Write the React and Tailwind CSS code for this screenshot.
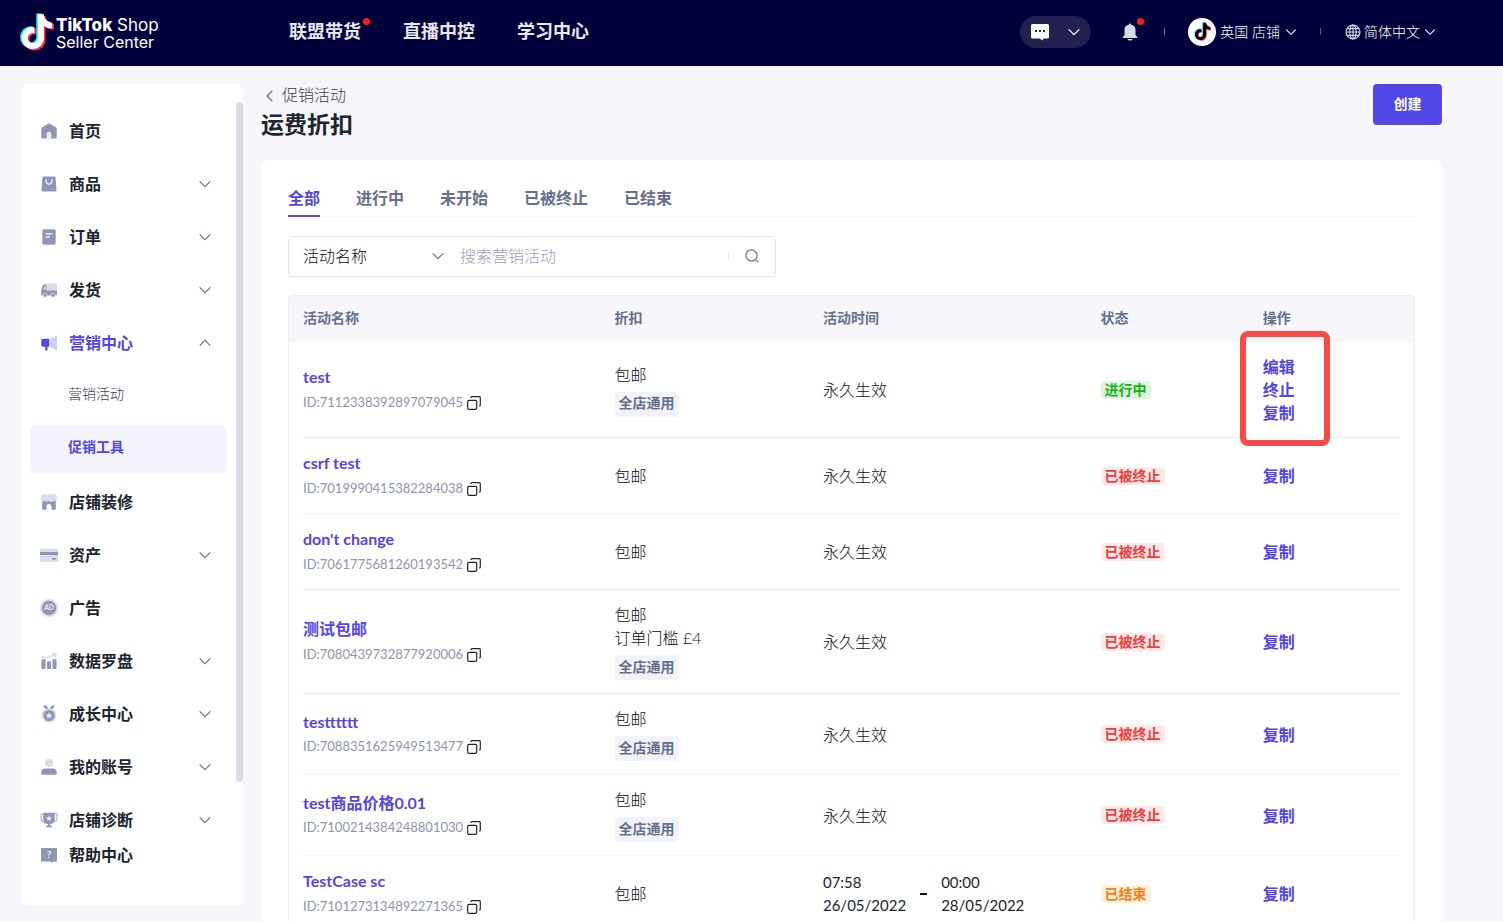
import React from "react";

const NOTE =
  "M448,209.91a210.06,210.06,0,0,1-122.77-39.25V349.38A162.55,162.55,0,1,1,185,188.31V278.2a74.62,74.62,0,1,0,52.23,71.18V0l88,0a121.18,121.18,0,0,0,1.86,22.17h0A122.18,122.18,0,0,0,381,102.39a121.43,121.43,0,0,0,67,20.14Z";

function TikTokNote({ className, main }) {
  return (
    <svg viewBox="-26 -14 500 548" className={className} aria-hidden="true">
      <path d={NOTE} fill="#25f4ee" transform="translate(-24 -12)" />
      <path d={NOTE} fill="#fe2c55" transform="translate(24 20)" />
      <path d={NOTE} fill={main} />
    </svg>
  );
}

function Chevron({ className = "", up = false }) {
  return (
    <svg viewBox="0 0 12 12" className={"h-3 w-3 shrink-0 " + className} fill="none" stroke="currentColor" strokeWidth="1.2" aria-hidden="true">
      <path d={up ? "M.7 8.7 6 3.4l5.3 5.3" : "M.7 3.3 6 8.6l5.3-5.3"} />
    </svg>
  );
}

const D = "#9195b6";
const L = "#d8dbe8";

const icons = {
  home: (
    <>
      <path d="M9 1.2 16.2 5.6a1 1 0 0 1 .5.9v9.3a.8.8 0 0 1-.8.8H2.1a.8.8 0 0 1-.8-.8V6.500a1 1 0 0 1 .5-.9Z" fill={D} />
      <path d="M6.700 16.600V12a2.300 2.300 0 0 1 4.600 0v4.600Z" fill="#eceef9" />
    </>
  ),
  bag: (
    <>
      <path d="M3.400 1.500h11.200a1 1 0 0 1 1 .9l.9 13.100a1 1 0 0 1-1 1.100h-13a1 1 0 0 1-1-1.100l.9-13.100a1 1 0 0 1 1-.9Z" fill={D} />
      <path d="M6.200 4.300v2a2.800 2.800 0 0 0 5.600 0v-2" stroke="#e6e8f4" strokeWidth="1.400" fill="none" />
    </>
  ),
  order: (
    <>
      <rect x="2.300" y="1.300" width="13.400" height="15.400" rx="1.800" fill={D} />
      <path d="M5.500 5.700h6.700M5.500 9h4.500" stroke="#e6e8f4" strokeWidth="1.400" />
    </>
  ),
  truck: (
    <>
      <rect x="6.700" y="2.500" width="10.300" height="7.500" rx="1" fill={L} />
      <path d="M6.500 3.500H4.500a2 2 0 0 0-1.800 1.200L1.300 8.500v5.200a.8.8 0 0 0 .8.800h14.100a.8.800 0 0 0 .8-.8V9.500H6.500Z" fill={D} />
      <path d="M5.300 5.200H4.600L3.400 8.500h1.900Z" fill="#eceef9" />
      <circle cx="5.200" cy="14.200" r="2" fill={D} stroke="#fff" strokeWidth=".5" />
      <circle cx="13" cy="14.200" r="2" fill={D} stroke="#fff" strokeWidth=".5" />
    </>
  ),
  horn: (
    <>
      <path d="M9 5.200 17 1.500v15L9 12.300Z" fill="#cdcffb" />
      <path d="M2.800 4.800H9v8H7.500v3.600H5.300v-3.600H2.800a1.500 1.500 0 0 1-1.500-1.500v-5a1.500 1.500 0 0 1 1.500-1.500Z" fill="#5346e6" />
    </>
  ),
  store: (
    <>
      <path d="M2.200 7.500 4 6.800l2.500 1.700L9 6.800l2.500 1.700L14 6.800l1.800.7v8.300a1 1 0 0 1-1 1h-3.300v-3.300a2.500 2.500 0 0 0-5 0v3.300H3.200a1 1 0 0 1-1-1Z" fill={D} />
      <path d="M2.500 1.200h13a1 1 0 0 1 1 .9l.4 3.800a2.400 2.400 0 0 1-3.900 1.900 2.600 2.600 0 0 1-4 0 2.600 2.600 0 0 1-4 0 2.400 2.400 0 0 1-3.900-1.900l.4-3.800a1 1 0 0 1 1-.9Z" fill="#d9dded" />
    </>
  ),
  card: (
    <>
      <rect x="0" y="2.500" width="18" height="13.500" rx="1.800" fill={L} />
      <path d="M0 6h18v3H0Z" fill={D} />
      <path d="M12 12.800h4" stroke={D} strokeWidth="1.500" />
    </>
  ),
  ad: (
    <>
      <circle cx="9" cy="9" r="9" fill={L} />
      <circle cx="9" cy="9" r="7.200" fill={D} />
      <text x="9" y="11.300" textAnchor="middle" fontSize="6.500" fontWeight="900" fontFamily="Lato, sans-serif" fill="#e6e8f4">AD</text>
    </>
  ),
  chart: (
    <>
      <rect x="1.500" y="7.200" width="4" height="9.800" rx=".8" fill={D} />
      <rect x="7" y="9.200" width="4" height="7.800" rx=".8" fill={D} />
      <rect x="12.500" y="7.200" width="4" height="9.800" rx=".8" fill={D} />
      <path d="M1.500 4.500 7.500 6l8-4M12 1.300l4 .4-1.300 3.700" stroke={L} strokeWidth="1.400" fill="none" />
    </>
  ),
  medal: (
    <>
      <path d="M3 .5h3.500l2 3.500H5.500ZM15 .5h-3.500l-2 3.500h3Z" fill={D} />
      <circle cx="9" cy="10.500" r="7.300" fill={L} />
      <circle cx="9" cy="10.500" r="5.600" fill={D} />
      <path d="m9 7.300 1 2.100 2.300.3-1.700 1.600.4 2.300L9 12.500l-2 1.100.4-2.300-1.700-1.600 2.300-.3Z" fill="#e6e8f4" />
    </>
  ),
  user: (
    <>
      <circle cx="9" cy="5" r="4" fill={L} />
      <path d="M1.300 14.200A4 4 0 0 1 5 10.500h8a4 4 0 0 1 3.700 3.700v1.500a1 1 0 0 1-1 1H2.300a1 1 0 0 1-1-1Z" fill={D} />
    </>
  ),
  trophy: (
    <>
      <path d="M3.500 3H1.200v4a4 4 0 0 0 3.300 4M14.500 3h2.300v4a4 4 0 0 1-3.300 4" stroke="#b7bad0" strokeWidth="1.300" fill="none" />
      <path d="M3.300 1.700h11.400v6.500a5.700 5 0 0 1-4.700 5v1.300h2v1.700H6v-1.700h2v-1.300a5.700 5 0 0 1-4.700-5Z" fill={D} />
      <path d="m9 4.300.9 1.900 2.100.3-1.500 1.500.3 2.100L9 9.100l-1.800 1 .3-2.100L6 6.500l2.100-.3Z" fill="#e6e8f4" />
    </>
  ),
  help: (
    <>
      <path d="M2 2h14a1 1 0 0 1 1 1v11.500a1 1 0 0 1-1 1h-3.300V17l-2.700-1.500H2a1 1 0 0 1-1-1V3a1 1 0 0 1 1-1Z" fill={D} />
      <text x="9" y="12.300" textAnchor="middle" fontSize="10" fontWeight="700" fontFamily="Lato, sans-serif" fill="#f0f1fa">?</text>
    </>
  ),
};

function NavIcon({ name }) {
  return (
    <svg viewBox="0 0 18 18" className="h-[18px] w-[18px] shrink-0" aria-hidden="true">
      {icons[name]}
    </svg>
  );
}

const nav = [
  { icon: "home", label: "首页" },
  { icon: "bag", label: "商品", more: true },
  { icon: "order", label: "订单", more: true },
  { icon: "truck", label: "发货", more: true },
  { icon: "horn", label: "营销中心", more: true, open: true },
  { sub: true, label: "营销活动" },
  { sub: true, label: "促销工具", active: true },
  { icon: "store", label: "店铺装修" },
  { icon: "card", label: "资产", more: true },
  { icon: "ad", label: "广告" },
  { icon: "chart", label: "数据罗盘", more: true },
  { icon: "medal", label: "成长中心", more: true },
  { icon: "user", label: "我的账号", more: true },
  { icon: "trophy", label: "店铺诊断", more: true },
];

function NavItem({ item }) {
  if (item.sub) {
    return (
      <li className="flex h-[53px] items-center pr-4 pl-[9px]">
        <a
          href="#"
          className={
            "flex h-12 flex-1 items-center rounded-md pb-[3px] pl-[38px] text-sm " +
            (item.active ? "bg-[#f4f4fe] font-bold text-[#5346e6]" : "font-light text-[#3c4152]")
          }
        >
          {item.label}
        </a>
      </li>
    );
  }
  const cls = "flex h-[53px] w-full items-center gap-[11px] pr-8 pl-[19px] text-base font-bold " + (item.open ? "text-[#5346e6]" : "text-[#20242e]");
  const inner = (
    <>
      <NavIcon name={item.icon} />
      <span>{item.label}</span>
      {item.more && <Chevron up={item.open} className="ml-auto text-[#6b7190]" />}
    </>
  );
  return (
    <li>
      {item.more ? (
        <button type="button" aria-expanded={!!item.open} className={cls}>{inner}</button>
      ) : (
        <a href="#" className={cls}>{inner}</a>
      )}
    </li>
  );
}

const rows = [
  { name: "test", id: "7112338392897079045", lines: ["包邮"], tag: true, status: "on" },
  { name: "csrf test", id: "7019990415382284038", lines: ["包邮"], status: "off" },
  { name: "don't change", id: "7061775681260193542", lines: ["包邮"], status: "off" },
  { name: "测试包邮", id: "7080439732877920006", lines: ["包邮", "订单门槛 £4"], tag: true, status: "off" },
  { name: "testttttt", id: "7088351625949513477", lines: ["包邮"], tag: true, status: "off" },
  { name: "test商品价格0.01", id: "7100214384248801030", lines: ["包邮"], tag: true, status: "off" },
  { name: "TestCase sc", id: "7101273134892271365", lines: ["包邮"], status: "end", from: ["07:58", "26/05/2022"], to: ["00:00", "28/05/2022"] },
];

const statuses = {
  on: { label: "进行中", cls: "bg-[#dff4df] text-[#16b316]" },
  off: { label: "已被终止", cls: "bg-[#ffe8e8] text-[#f23b3b]" },
  end: { label: "已结束", cls: "bg-[#fff0de] text-[#fb7d0c]" },
};

function CopyIcon() {
  return (
    <svg viewBox="0 0 14 14" className="h-[14px] w-[14px]" fill="none" stroke="#20242e" strokeWidth="1.200" aria-hidden="true">
      <rect x=".7" y="4.300" width="9" height="9" rx="1.300" />
      <path d="M4 2V1.700a1 1 0 0 1 1-1h7.300a1 1 0 0 1 1 1v7.300a1 1 0 0 1-1 1H12" />
    </svg>
  );
}

function Row({ row }) {
  const status = statuses[row.status];
  const running = row.status === "on";
  return (
    <tr className="border-b border-[#eef0f7]">
      <td className="py-3">
        <a href="#" className="block text-base leading-[26px] font-bold text-[#5346e6]">{row.name}</a>
        <div className="flex h-[25px] items-center gap-1 text-[13px] text-[#8f95aa]">
          ID:{row.id}
          <button type="button" aria-label="复制 ID"><CopyIcon /></button>
        </div>
      </td>
      <td className="py-[13px] text-base leading-[23px] font-light text-[#0c0e14]">
        {row.lines.map((l) => <div key={l}>{l}</div>)}
        {row.tag && (
          <span className="mt-[6px] flex h-[25px] w-fit items-center rounded bg-[#f2f3fa] px-1 pb-[2px] text-sm font-bold text-[#666f8d]">全店通用</span>
        )}
      </td>
      <td className="text-base leading-[23px] font-light text-[#0c0e14]">
        {row.from ? (
          <div className="flex items-center gap-[14px] text-[15px] font-normal text-[#20242e]">
            <div>{row.from.map((t) => <div key={t}>{t}</div>)}</div>
            <span className="h-[2px] w-[7px] bg-[#111]" />
            <div>{row.to.map((t) => <div key={t}>{t}</div>)}</div>
          </div>
        ) : (
          "永久生效"
        )}
      </td>
      <td>
        <span className={"flex h-[18px] w-fit items-center rounded px-1 text-sm font-bold " + status.cls}>{status.label}</span>
      </td>
      <td className="py-[13px]">
        <div className="relative flex flex-col items-start text-base leading-[23px] font-bold text-[#5346e6]">
          {running && <button type="button">编辑</button>}
          {running && <button type="button">终止</button>}
          <button type="button">复制</button>
          {running && <span className="pointer-events-none absolute -top-6 -bottom-[22px] -left-[23px] w-[90px] rounded-lg border-[6px] border-[#f94a47]" />}
        </div>
      </td>
    </tr>
  );
}

function Header() {
  return (
    <header className="flex h-[66px] shrink-0 items-center bg-[#02003b] pr-[67px] pb-[3px] pl-5 text-white">
      <a href="#" className="flex w-[269px] shrink-0 items-center gap-[2px]">
        <TikTokNote main="#fff" className="h-[38px] w-[34px]" />
        <span className="mt-1 block font-['Inter',sans-serif] whitespace-nowrap">
          <span className="block text-[17px] leading-[17px]"><b className="font-extrabold">TikTok</b> Shop</span>
          <span className="block text-base leading-[17px]">Seller Center</span>
        </span>
      </a>
      <nav className="flex gap-[42px] text-[18px] font-bold text-[#e8e9f5]">
        <a href="#" className="relative">
          联盟带货
          <span className="absolute top-0 -right-[9px] h-[7px] w-[7px] rounded-full bg-[#fa2020]" />
        </a>
        <a href="#">直播中控</a>
        <a href="#">学习中心</a>
      </nav>
      <div className="ml-auto flex items-center text-sm font-light">
        <button type="button" aria-label="消息" className="flex h-8 w-[71px] items-center justify-between rounded-full bg-[#22204f] pr-[11px] pl-[11px]">
          <svg viewBox="0 0 18 18" className="h-[18px] w-[18px]" aria-hidden="true">
            <path d="M1.500 1h15a1.500 1.500 0 0 1 1.500 1.500V14a1.500 1.500 0 0 1-1.500 1.500H12V17.500L8.500 15.500h-7A1.500 1.500 0 0 1 0 14V2.500A1.500 1.500 0 0 1 1.500 1Z" fill="#fff" />
            <path d="M4 7h2v2H4ZM8 7h2v2H8ZM12 7h2v2h-2Z" fill="#22204f" />
          </svg>
          <Chevron />
        </button>
        <button type="button" aria-label="通知" className="relative ml-[31px]">
          <svg viewBox="0 0 16 18" className="h-[18px] w-4" fill="#d9dae8" aria-hidden="true">
            <path d="M8 .5a1 1 0 0 1 1 1 5.500 5.500 0 0 1 4.500 5.400v5.300l1.700 1.900v.9H.8v-.9l1.700-1.900V6.900A5.500 5.500 0 0 1 7 1.500a1 1 0 0 1 1-1ZM5.500 16h5a2.500 1.600 0 0 1-5 0Z" />
          </svg>
          <span className="absolute -top-[5px] -right-[6px] h-[7px] w-[7px] rounded-full bg-[#fa2020]" />
        </button>
        <span className="ml-[26px] h-[7px] w-px bg-[#77769a]" />
        <button type="button" className="ml-[23px] flex items-center">
          <span className="mr-1 flex h-7 w-7 items-center justify-center rounded-full bg-white">
            <TikTokNote main="#000" className="h-[19px] w-[17px]" />
          </span>
          英国 店铺
          <Chevron className="ml-[5px] scale-90" />
        </button>
        <span className="ml-[23px] h-[7px] w-px bg-[#5a598a]" />
        <button type="button" className="ml-6 flex items-center">
          <svg viewBox="0 0 16 16" className="mr-[3px] h-4 w-4" fill="none" stroke="#d6d7ea" strokeWidth="1.100" aria-hidden="true">
            <circle cx="8" cy="8" r="7" />
            <ellipse cx="8" cy="8" rx="3.200" ry="7" />
            <path d="M8 1v14M1 8h14M2 4.600h12M2 11.400h12" />
          </svg>
          简体中文
          <Chevron className="ml-1 scale-90" />
        </button>
      </div>
    </header>
  );
}

const tabs = ["全部", "进行中", "未开始", "已被终止", "已结束"];

export default function App() {
  return (
    <div className="flex h-screen flex-col overflow-hidden bg-[#f6f6fb] font-['Lato','Noto_Sans_CJK_SC',sans-serif] text-[#20242e]">
      <Header />
      <div className="flex min-h-0 flex-1 gap-[18px] pr-[61px] pl-[21px]">
        <aside className="relative mt-[18px] mb-4 flex w-[222px] shrink-0 flex-col rounded-md bg-white pb-8">
          <nav className="min-h-0 flex-1 overflow-hidden pt-5">
            <ul>
              {nav.map((item) => <NavItem key={item.label} item={item} />)}
            </ul>
          </nav>
          <a href="#" className="flex h-[37px] shrink-0 items-center gap-[11px] pl-[19px] text-base font-bold">
            <NavIcon name="help" />
            帮助中心
          </a>
          <span className="absolute top-[18px] right-0 bottom-[123px] w-[7px] rounded-full bg-[#d9dce6]" />
        </aside>

        <main className="min-w-0 flex-1 overflow-y-auto [scrollbar-width:none]">
          <div className="flex items-start justify-between pt-[18px]">
            <div>
              <a href="#" className="flex items-center gap-[6px] pl-[3px] text-base leading-[22px] font-light text-[#3c4152]">
                <svg viewBox="0 0 12 12" className="mt-[2px] h-3 w-3" fill="none" stroke="#6b7190" strokeWidth="1.300" aria-hidden="true">
                  <path d="M8.300.8 3.100 6l5.200 5.200" />
                </svg>
                促销活动
              </a>
              <h1 className="text-[23px] leading-9 font-bold">运费折扣</h1>
            </div>
            <button type="button" className="h-[41px] w-[69px] rounded bg-[#5346e6] pb-[2px] text-sm font-bold text-white">创建</button>
          </div>

          <section className="mt-[18px] rounded-lg bg-white px-[27px] pt-[26px] pb-10">
            <div role="tablist" className="flex gap-9 border-b border-[#eff0f6] text-base leading-6 font-bold text-[#666f8d]">
              {tabs.map((t, i) => (
                <button
                  key={t}
                  type="button"
                  role="tab"
                  aria-selected={i === 0}
                  className={"-mb-px border-b-2 pb-[5px] " + (i === 0 ? "border-[#5346e6] text-[#5346e6]" : "border-transparent")}
                >
                  {t}
                </button>
              ))}
            </div>

            <form className="mt-[19px] flex h-[41px] w-[488px] items-center rounded border border-[#e3e5f1] pb-[2px] text-base font-light" onSubmit={(e) => e.preventDefault()}>
              <div className="relative flex w-[155px] items-center">
                <select aria-label="搜索字段" className="w-full appearance-none bg-transparent pl-[14px] text-[#0c0e14] outline-none">
                  <option>活动名称</option>
                </select>
                <Chevron className="pointer-events-none absolute right-0 text-[#6b7190]" />
              </div>
              <input aria-label="搜索营销活动" placeholder="搜索营销活动" className="min-w-0 flex-1 pl-4 outline-none placeholder:text-[#9aa1bb]" />
              <span className="h-2 w-px bg-[#e3e5f1]" />
              <button type="submit" aria-label="搜索" className="flex w-[46px] justify-center">
                <svg viewBox="0 0 14 14" className="h-[14px] w-[14px]" fill="none" stroke="#6b7190" strokeWidth="1.200" aria-hidden="true">
                  <circle cx="6.500" cy="6.500" r="5.600" />
                  <path d="m10.600 10.600 2.700 2.700" />
                </svg>
              </button>
            </form>

            <div className="mt-[18px] rounded border border-[#eeeff6] bg-[linear-gradient(#f6f6fb_46px,#ffffff_46px)] px-[14px]">
              <table className="w-full table-fixed border-collapse text-left">
                <thead>
                  <tr className="h-[46px] text-sm text-[#666f8d]">
                    <th className="w-[28.4%] pb-[2px] font-bold">活动名称</th>
                    <th className="w-[19%] pb-[2px] font-bold">折扣</th>
                    <th className="w-[25.3%] pb-[2px] font-bold">活动时间</th>
                    <th className="w-[14.8%] pb-[2px] font-bold">状态</th>
                    <th className="pb-[2px] font-bold">操作</th>
                  </tr>
                </thead>
                <tbody>
                  {rows.map((row) => <Row key={row.id} row={row} />)}
                </tbody>
              </table>
            </div>
          </section>
        </main>
      </div>
    </div>
  );
}
